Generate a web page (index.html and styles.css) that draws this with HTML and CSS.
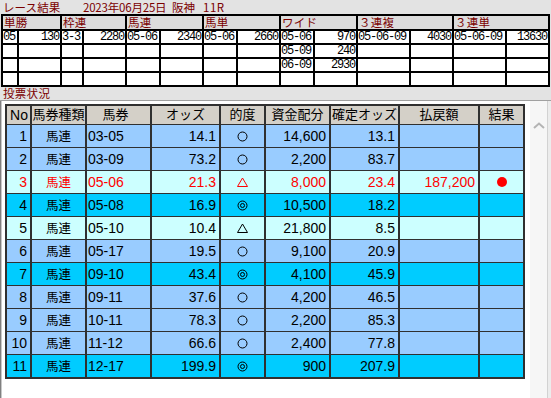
FILE: index.html
```html
<!DOCTYPE html>
<html lang="ja">
<head>
<meta charset="utf-8">
<link rel="stylesheet" href="styles.css">
</head>
<body>
<div class="screen">
  <div class="title">
    <span class="t1">レース結果</span><span class="t2">2023年06月25日</span><span class="t3">阪神</span><span class="t4">11R</span>
  </div>
  <div class="results">
    <div class="rh s2">単勝</div><div class="rh s2">枠連</div><div class="rh s2">馬連</div><div class="rh s2">馬単</div><div class="rh s2">ワイド</div><div class="rh s2">３連複</div><div class="rh s2">３連単</div>

    <div class="rc">05</div><div class="rc r">130</div><div class="rc">3-3</div><div class="rc r">2280</div><div class="rc">05-06</div><div class="rc r">2340</div><div class="rc">05-06</div><div class="rc r">2660</div><div class="rc">05-06</div><div class="rc r">970</div><div class="rc">05-06-09</div><div class="rc r">4030</div><div class="rc">05-06-09</div><div class="rc r">13630</div>

    <div class="rc"></div><div class="rc r"></div><div class="rc"></div><div class="rc r"></div><div class="rc"></div><div class="rc r"></div><div class="rc"></div><div class="rc r"></div><div class="rc">05-09</div><div class="rc r">240</div><div class="rc"></div><div class="rc r"></div><div class="rc"></div><div class="rc r"></div>

    <div class="rc"></div><div class="rc r"></div><div class="rc"></div><div class="rc r"></div><div class="rc"></div><div class="rc r"></div><div class="rc"></div><div class="rc r"></div><div class="rc">06-09</div><div class="rc r">2930</div><div class="rc"></div><div class="rc r"></div><div class="rc"></div><div class="rc r"></div>

    <div class="rc"></div><div class="rc r"></div><div class="rc"></div><div class="rc r"></div><div class="rc"></div><div class="rc r"></div><div class="rc"></div><div class="rc r"></div><div class="rc"></div><div class="rc r"></div><div class="rc"></div><div class="rc r"></div><div class="rc"></div><div class="rc r"></div>
  </div>
  <div class="label">投票状況</div>
  <div class="panel">
    <div class="pane">
      <table class="bets">
        <colgroup>
          <col class="w-no"><col class="w-type"><col class="w-combo"><col class="w-odds"><col class="w-mark"><col class="w-fund"><col class="w-final"><col class="w-pay"><col class="w-res">
        </colgroup>
        <thead>
          <tr><th class="r">No</th><th>馬券種類</th><th class="combo-h">馬券</th><th>オッズ</th><th>的度</th><th>資金配分</th><th>確定オッズ</th><th>払戻額</th><th>結果</th></tr>
        </thead>
        <tbody>
          <tr class="blue"><td class="r">1</td><td class="c jp">馬連</td><td class="l">03-05</td><td class="r">14.1</td><td class="c"><svg class="mk" viewBox="0 0 11 11"><circle cx="5.5" cy="5.5" r="4.5"/></svg></td><td class="r">14,600</td><td class="r">13.1</td><td class="r"></td><td></td></tr>
          <tr class="blue"><td class="r">2</td><td class="c jp">馬連</td><td class="l">03-09</td><td class="r">73.2</td><td class="c"><svg class="mk" viewBox="0 0 11 11"><circle cx="5.5" cy="5.5" r="4.5"/></svg></td><td class="r">2,200</td><td class="r">83.7</td><td class="r"></td><td></td></tr>
          <tr class="pale hit"><td class="r">3</td><td class="c jp">馬連</td><td class="l">05-06</td><td class="r">21.3</td><td class="c"><svg class="mk" viewBox="0 0 11 11"><polygon points="5.5,1 10.5,9.5 0.5,9.5"/></svg></td><td class="r">8,000</td><td class="r">23.4</td><td class="r">187,200</td><td class="c"><span class="dot"></span></td></tr>
          <tr class="cyan"><td class="r">4</td><td class="c jp">馬連</td><td class="l">05-08</td><td class="r">16.9</td><td class="c"><svg class="mk" viewBox="0 0 11 11"><circle cx="5.5" cy="5.5" r="4.5"/><circle cx="5.5" cy="5.5" r="2"/></svg></td><td class="r">10,500</td><td class="r">18.2</td><td class="r"></td><td></td></tr>
          <tr class="pale"><td class="r">5</td><td class="c jp">馬連</td><td class="l">05-10</td><td class="r">10.4</td><td class="c"><svg class="mk" viewBox="0 0 11 11"><polygon points="5.5,1 10.5,9.5 0.5,9.5"/></svg></td><td class="r">21,800</td><td class="r">8.5</td><td class="r"></td><td></td></tr>
          <tr class="blue"><td class="r">6</td><td class="c jp">馬連</td><td class="l">05-17</td><td class="r">19.5</td><td class="c"><svg class="mk" viewBox="0 0 11 11"><circle cx="5.5" cy="5.5" r="4.5"/></svg></td><td class="r">9,100</td><td class="r">20.9</td><td class="r"></td><td></td></tr>
          <tr class="cyan"><td class="r">7</td><td class="c jp">馬連</td><td class="l">09-10</td><td class="r">43.4</td><td class="c"><svg class="mk" viewBox="0 0 11 11"><circle cx="5.5" cy="5.5" r="4.5"/><circle cx="5.5" cy="5.5" r="2"/></svg></td><td class="r">4,100</td><td class="r">45.9</td><td class="r"></td><td></td></tr>
          <tr class="blue"><td class="r">8</td><td class="c jp">馬連</td><td class="l">09-11</td><td class="r">37.6</td><td class="c"><svg class="mk" viewBox="0 0 11 11"><circle cx="5.5" cy="5.5" r="4.5"/></svg></td><td class="r">4,200</td><td class="r">46.5</td><td class="r"></td><td></td></tr>
          <tr class="blue"><td class="r">9</td><td class="c jp">馬連</td><td class="l">10-11</td><td class="r">78.3</td><td class="c"><svg class="mk" viewBox="0 0 11 11"><circle cx="5.5" cy="5.5" r="4.5"/></svg></td><td class="r">2,200</td><td class="r">85.3</td><td class="r"></td><td></td></tr>
          <tr class="blue"><td class="r">10</td><td class="c jp">馬連</td><td class="l">11-12</td><td class="r">66.6</td><td class="c"><svg class="mk" viewBox="0 0 11 11"><circle cx="5.5" cy="5.5" r="4.5"/></svg></td><td class="r">2,400</td><td class="r">77.8</td><td class="r"></td><td></td></tr>
          <tr class="cyan"><td class="r">11</td><td class="c jp">馬連</td><td class="l">12-17</td><td class="r">199.9</td><td class="c"><svg class="mk" viewBox="0 0 11 11"><circle cx="5.5" cy="5.5" r="4.5"/><circle cx="5.5" cy="5.5" r="2"/></svg></td><td class="r">900</td><td class="r">207.9</td><td class="r"></td><td></td></tr>
        </tbody>
      </table>
    </div>
    <div class="scroll">
      <svg class="chev" viewBox="0 0 12 7"><polyline points="1,6 6,1.5 11,6"/></svg>
    </div>
    <div class="edge"></div>
  </div>
</div>
</body>
</html>
```

FILE: styles.css
```css
* { box-sizing: border-box; }
html, body { margin: 0; padding: 0; }
body {
  width: 551px;
  height: 398px;
  overflow: hidden;
  background: #e3e3e3;
  font-family: "Liberation Sans", "Noto Sans CJK JP", sans-serif;
}
.screen {
  display: flex;
  flex-direction: column;
  width: 551px;
  height: 398px;
}

/* title */
.title {
  height: 14px;
  display: flex;
  align-items: center;
  font-family: "Noto Sans CJK JP", sans-serif;
  font-size: 11.5px;
  line-height: 14px;
  color: #7b0000;
  white-space: nowrap;
}
.title span { display: block; }
.t1 { margin-left: 3px; letter-spacing: 0.1px; width: 80px; }
.t2 { width: 89px; letter-spacing: -0.2px; }
.t3 { width: 31px; }
.t4 { letter-spacing: 0.5px; }

/* top results grid */
.results {
  display: grid;
  grid-template-columns: 14px 41px 20px 41px 32px 41px 32px 41px 32px 41px 51px 41px 51px 41px;
  grid-template-rows: 13px 12px 12px 12px 12px;
  gap: 2px;
  padding: 2px;
  background: #000;
  margin-left: 1px;
  width: max-content;
}
.rh {
  grid-column: span 2;
  background: #dcdcdc;
  color: #7b0000;
  font-family: "Noto Sans CJK JP", sans-serif;
  font-size: 11.5px;
  line-height: 13px;
  padding-left: 1px;
  letter-spacing: 0.3px;
  white-space: nowrap;
}
.rc {
  background: #fff;
  font-family: "Liberation Mono", "DejaVu Sans Mono", monospace;
  font-size: 12px;
  line-height: 12px;
  letter-spacing: -1.2px;
  padding-left: 0;
  color: #000;
  white-space: nowrap;
}
.rc.r { text-align: right; padding-right: 1px; }

/* label */
.label {
  height: 13px;
  font-family: "Noto Sans CJK JP", sans-serif;
  font-size: 11.5px;
  line-height: 11px;
  color: #7b0000;
  padding-left: 3px;
  letter-spacing: 0.3px;
  padding-top: 1px;
}

/* panel */
.panel {
  flex: 1;
  display: flex;
  border-top: 1px solid #a0a0a0;
}
.pane {
  width: 530px;
  background: #fff;
  border-left: 1px solid #808080;
  box-shadow: inset 1px 0 0 #c8c8c8;
  padding: 3px 0 0 4px;
}
.scroll {
  width: 17px;
  background: #f6f6f6;
  padding: 21px 0 0 3px;
}
.chev {
  display: block;
  width: 12px;
  height: 7px;
  fill: none;
  stroke: #b4b4b4;
  stroke-width: 2;
}
.edge {
  width: 4px;
  background: #ececec;
  border-left: 1px solid #d2d2d2;
}

/* bets table */
.bets {
  border-collapse: separate;
  border-spacing: 2px 1px;
  background: #303030;
  border-top: 1px solid #303030;
  border-bottom: 1px solid #303030;
  table-layout: fixed;
  width: 520px;
  font-size: 14px;
  color: #000;
}
.w-no { width: 23px; }
.w-type { width: 53px; }
.w-combo { width: 63px; }
.w-odds { width: 67px; }
.w-mark { width: 43px; }
.w-fund { width: 63px; }
.w-final { width: 67px; }
.w-pay { width: 78px; }
.w-res { width: 43px; }

.bets th {
  height: 18px;
  padding: 0;
  background: #d4d0c8;
  font-family: "Liberation Sans", "Noto Sans CJK JP", sans-serif;
  font-size: 13px;
  font-weight: normal;
  line-height: 18px;
  text-align: center;
  white-space: nowrap;
}
.bets th.r { text-align: right; padding-right: 2px; font-size: 14px; }
.bets th.combo-h { padding-right: 6px; }
.bets td {
  height: 22px;
  padding: 0 3px 0 2px;
  line-height: 22px;
  white-space: nowrap;
}
.bets td.r { text-align: right; }
.bets td.l { text-align: left; padding-left: 1px; }
.bets td.c { text-align: center; padding: 0; }
.bets td.jp { font-family: "Noto Sans CJK JP", sans-serif; font-size: 12.5px; }

.blue td { background: #99ccff; }
.cyan td { background: #00ccff; }
.pale td { background: #ccffff; }
.hit td { color: #ff0000; }

.mk {
  display: inline-block;
  vertical-align: middle;
  width: 11px;
  height: 11px;
  fill: none;
  stroke: #000;
  stroke-width: 1;
  margin-top: -2px;
}
.hit .mk { stroke: #ff0000; }
.dot {
  display: inline-block;
  vertical-align: middle;
  width: 10px;
  height: 10px;
  border-radius: 50%;
  background: #ff0000;
  margin-top: -2px;
}
```
